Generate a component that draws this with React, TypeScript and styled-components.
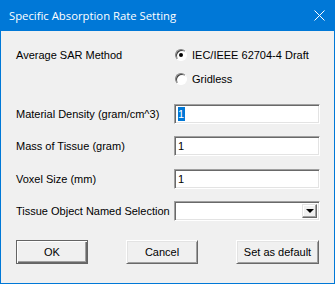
import * as React from 'react'
import styled, { createGlobalStyle } from 'styled-components'

const GlobalStyle = createGlobalStyle`
  html, body {
    margin: 0;
    padding: 0;
    background: #f0f0f0;
  }
  * {
    box-sizing: border-box;
  }
`

const Window = styled.div`
  width: 335px;
  height: 284px;
  border: 1px solid #0078d7;
  border-top: none;
  background: #f0f0f0;
  display: flex;
  flex-direction: column;
  font-family: 'Liberation Sans', Arial, sans-serif;
  font-size: 11px;
  color: #000;
`

const TitleBar = styled.div`
  height: 31px;
  margin: 0 -1px;
  background: #0078d7;
  color: #fff;
  display: flex;
  align-items: center;
  justify-content: space-between;
  padding: 0 10px 0 9px;
  font-family: 'Open Sans', 'Noto Sans', sans-serif;
  font-size: 11.3px;
  flex-shrink: 0;
`

const Body = styled.div`
  flex: 1;
  padding: 12px 15px 0 15px;
  display: flex;
  flex-direction: column;
`

const MethodRow = styled.div`
  display: grid;
  grid-template-columns: 158px 1fr;
  height: 48px;
`

const Label = styled.div`
  display: flex;
  align-items: center;
  height: 24px;
  white-space: nowrap;
`

const RadioGroup = styled.div`
  display: flex;
  flex-direction: column;
`

const RadioOption = styled.div`
  display: flex;
  align-items: center;
  height: 24px;
  gap: 5px;
  padding-left: 1px;
`

const RadioCircle = styled.span<{ $checked?: boolean }>`
  width: 12px;
  height: 12px;
  border-radius: 50%;
  background: #fff;
  border: 1px solid;
  border-color: #808080 #ffffff #ffffff #808080;
  box-shadow: inset 1px 1px 0 #404040;
  display: flex;
  align-items: center;
  justify-content: center;

  &::after {
    content: '';
    width: 4px;
    height: 4px;
    border-radius: 50%;
    background: ${(p) => (p.$checked ? '#000' : 'transparent')};
  }
`

const FieldRow = styled.div<{ $top: number }>`
  display: grid;
  grid-template-columns: 158px 146px;
  align-items: center;
  margin-top: ${(p) => p.$top}px;
  height: 20px;
`

const TextBox = styled.div`
  height: 20px;
  background: #fff;
  border-top: 1px solid #a0a0a0;
  border-left: 1px solid #a0a0a0;
  border-right: 1px solid #ffffff;
  border-bottom: 1px solid #ffffff;
  box-shadow: inset 1px 1px 0 #696969, inset -1px -1px 0 #e3e3e3;
  display: flex;
  align-items: center;
  padding-left: 3px;
`

const Value = styled.span<{ $selected?: boolean }>`
  background: ${(p) => (p.$selected ? '#0078d7' : 'transparent')};
  color: ${(p) => (p.$selected ? '#fff' : '#000')};
  line-height: 14px;
  padding: 0 1px 0 0;
`

const DropButton = styled.div`
  margin-left: auto;
  margin-right: 2px;
  width: 15px;
  height: 14px;
  background: #f0f0f0;
  border-top: 1px solid #e3e3e3;
  border-left: 1px solid #e3e3e3;
  border-right: 1px solid #696969;
  border-bottom: 1px solid #696969;
  box-shadow: inset -1px -1px 0 #a0a0a0, inset 1px 1px 0 #ffffff;
  display: flex;
  align-items: center;
  justify-content: center;

  &::after {
    content: '';
    border-left: 4px solid transparent;
    border-right: 4px solid transparent;
    border-top: 4px solid #000;
  }
`

const ButtonBar = styled.div`
  margin-top: 21px;
  display: flex;
  justify-content: space-between;
`

const Button = styled.div<{ $width: number; $default?: boolean }>`
  width: ${(p) => p.$width}px;
  height: 24px;
  background: #f0f0f0;
  display: flex;
  align-items: center;
  justify-content: center;
  border-top: 1px solid ${(p) => (p.$default ? '#646464' : '#ffffff')};
  border-left: 1px solid ${(p) => (p.$default ? '#646464' : '#ffffff')};
  border-right: 1px solid ${(p) => (p.$default ? '#646464' : '#696969')};
  border-bottom: 1px solid ${(p) => (p.$default ? '#646464' : '#696969')};
  box-shadow: ${(p) =>
    p.$default
      ? 'inset 1px 1px 0 #ffffff, inset -1px -1px 0 #696969, inset -2px -2px 0 #a0a0a0'
      : 'inset 1px 1px 0 #e3e3e3, inset -1px -1px 0 #a0a0a0'};
`

const CloseIcon = () => (
  <svg width="11" height="11" viewBox="0 0 11 11">
    <path d="M0.5 0.5 L10.5 10.5 M10.5 0.5 L0.5 10.5" stroke="#fff" strokeWidth="1" />
  </svg>
)

const App: React.FC = () => (
  <>
    <GlobalStyle />
    <Window>
      <TitleBar>
        <span>Specific Absorption Rate Setting</span>
        <CloseIcon />
      </TitleBar>
      <Body>
        <MethodRow>
          <Label>Average SAR Method</Label>
          <RadioGroup>
            <RadioOption>
              <RadioCircle $checked />
              <span>IEC/IEEE 62704-4 Draft</span>
            </RadioOption>
            <RadioOption>
              <RadioCircle />
              <span>Gridless</span>
            </RadioOption>
          </RadioGroup>
        </MethodRow>
        <FieldRow $top={11}>
          <Label>Material Density (gram/cm^3)</Label>
          <TextBox>
            <Value $selected>1</Value>
          </TextBox>
        </FieldRow>
        <FieldRow $top={12}>
          <Label>Mass of Tissue (gram)</Label>
          <TextBox>
            <Value>1</Value>
          </TextBox>
        </FieldRow>
        <FieldRow $top={13}>
          <Label>Voxel Size (mm)</Label>
          <TextBox>
            <Value>1</Value>
          </TextBox>
        </FieldRow>
        <FieldRow $top={12}>
          <Label>Tissue Object Named Selection</Label>
          <TextBox>
            <DropButton />
          </TextBox>
        </FieldRow>
        <ButtonBar>
          <Button $width={72} $default>OK</Button>
          <Button $width={72}>Cancel</Button>
          <Button $width={83}>Set as default</Button>
        </ButtonBar>
      </Body>
    </Window>
  </>
)

export default App
